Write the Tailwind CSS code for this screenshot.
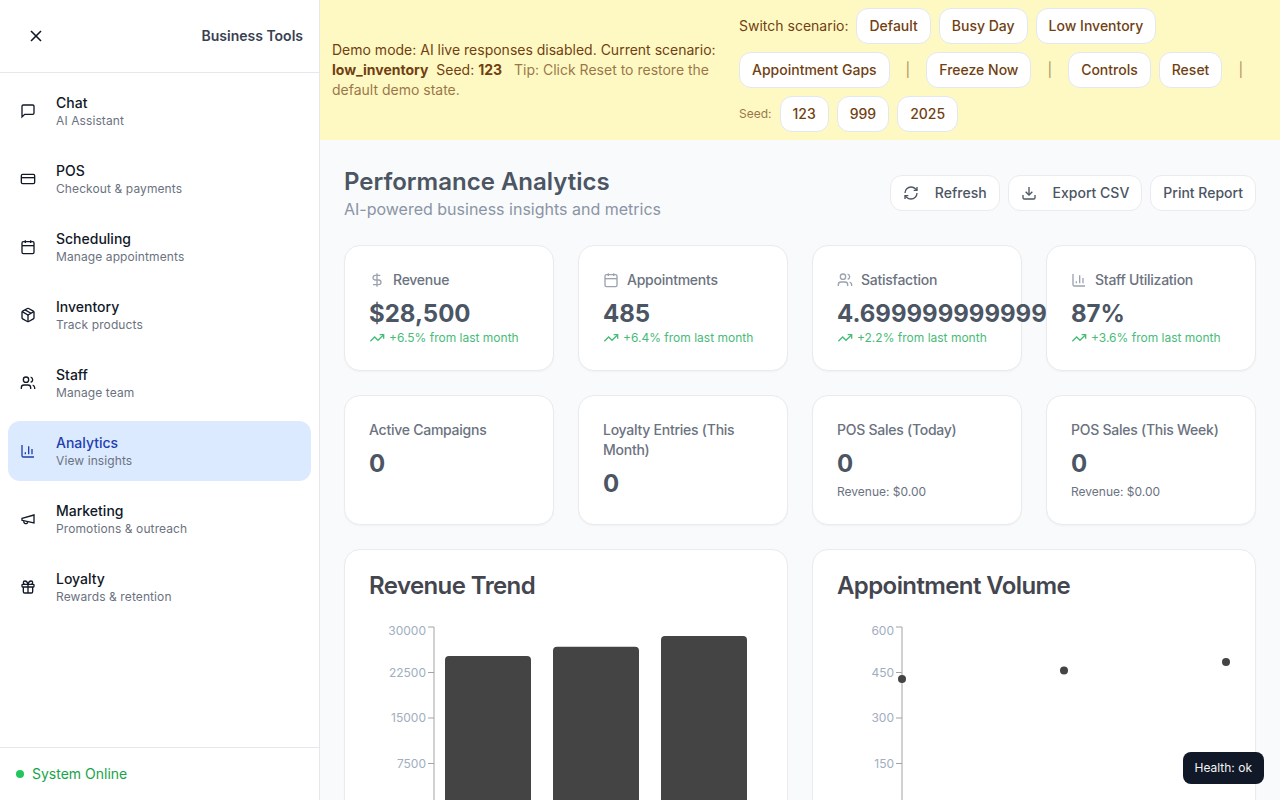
<!DOCTYPE html>
<html lang="en">
<head>
    <meta charset="UTF-8" />
    <meta name="viewport" content="width=device-width, initial-scale=1.0" />
    <title>Performance Analytics</title>
    <script src="https://cdn.jsdelivr.net/npm/@tailwindcss/browser@4"></script>
</head>
<body class="h-screen overflow-hidden flex bg-white font-['Inter',sans-serif]">

<!-- icons -->
<svg class="hidden">
    <symbol id="i-x" viewBox="0 0 24 24"><path d="M18 6 6 18"/><path d="m6 6 12 12"/></symbol>
    <symbol id="i-chat" viewBox="0 0 24 24"><path d="M21 15a2 2 0 0 1-2 2H7l-4 4V5a2 2 0 0 1 2-2h14a2 2 0 0 1 2 2z"/></symbol>
    <symbol id="i-card" viewBox="0 0 24 24"><rect width="20" height="14" x="2" y="5" rx="2"/><line x1="2" x2="22" y1="10" y2="10"/></symbol>
    <symbol id="i-calendar" viewBox="0 0 24 24"><path d="M8 2v4"/><path d="M16 2v4"/><rect width="18" height="18" x="3" y="4" rx="2"/><path d="M3 10h18"/></symbol>
    <symbol id="i-package" viewBox="0 0 24 24"><path d="m7.5 4.27 9 5.15"/><path d="M21 8a2 2 0 0 0-1-1.73l-7-4a2 2 0 0 0-2 0l-7 4A2 2 0 0 0 3 8v8a2 2 0 0 0 1 1.73l7 4a2 2 0 0 0 2 0l7-4A2 2 0 0 0 21 16Z"/><path d="m3.3 7 8.7 5 8.7-5"/><path d="M12 22V12"/></symbol>
    <symbol id="i-users" viewBox="0 0 24 24"><path d="M16 21v-2a4 4 0 0 0-4-4H6a4 4 0 0 0-4 4v2"/><circle cx="9" cy="7" r="4"/><path d="M22 21v-2a4 4 0 0 0-3-3.87"/><path d="M16 3.13a4 4 0 0 1 0 7.75"/></symbol>
    <symbol id="i-bars" viewBox="0 0 24 24"><path d="M3 3v16a2 2 0 0 0 2 2h16"/><path d="M18 17V9"/><path d="M13 17V5"/><path d="M8 17v-3"/></symbol>
    <symbol id="i-megaphone" viewBox="0 0 24 24"><path d="m3 11 18-5v12L3 14v-3z"/><path d="M11.6 16.8a3 3 0 1 1-5.8-1.6"/></symbol>
    <symbol id="i-gift" viewBox="0 0 24 24"><rect x="3" y="8" width="18" height="4" rx="1"/><path d="M12 8v13"/><path d="M19 12v7a2 2 0 0 1-2 2H7a2 2 0 0 1-2-2v-7"/><path d="M7.5 8a2.5 2.5 0 0 1 0-5A4.8 8 0 0 1 12 8a4.8 8 0 0 1 4.5-5 2.5 2.5 0 0 1 0 5"/></symbol>
    <symbol id="i-refresh" viewBox="0 0 24 24"><path d="M3 12a9 9 0 0 1 9-9 9.75 9.75 0 0 1 6.74 2.74L21 8"/><path d="M21 3v5h-5"/><path d="M21 12a9 9 0 0 1-9 9 9.75 9.75 0 0 1-6.74-2.74L3 16"/><path d="M8 16H3v5"/></symbol>
    <symbol id="i-download" viewBox="0 0 24 24"><path d="M21 15v4a2 2 0 0 1-2 2H5a2 2 0 0 1-2-2v-4"/><polyline points="7 10 12 15 17 10"/><line x1="12" x2="12" y1="15" y2="3"/></symbol>
    <symbol id="i-dollar" viewBox="0 0 24 24"><line x1="12" x2="12" y1="2" y2="22"/><path d="M17 5H9.5a3.5 3.5 0 0 0 0 7h5a3.5 3.5 0 0 1 0 7H6"/></symbol>
    <symbol id="i-trend" viewBox="0 0 24 24"><polyline points="22 7 13.5 15.5 8.5 10.5 2 17"/><polyline points="16 7 22 7 22 13"/></symbol>
</svg>

<!-- sidebar -->
<aside class="w-80 shrink-0 h-full flex flex-col border-r border-[#e5e7eb] bg-white">
    <div class="flex items-center justify-between px-4 py-4 border-b border-[#e5e7eb]">
        <button class="p-[10px] text-[#111827]"><svg class="w-5 h-5 fill-none stroke-current stroke-2"><use href="#i-x"/></svg></button>
        <span class="text-sm font-semibold text-[#374151]">Business Tools</span>
    </div>

    <nav class="flex-1 p-2 flex flex-col gap-2">
        <a class="flex items-center gap-5 px-3 py-3 rounded-xl">
            <svg class="w-4 h-4 fill-none stroke-current stroke-2 text-[#111827]"><use href="#i-chat"/></svg>
            <div><div class="text-sm font-medium text-[#111827]">Chat</div><div class="text-xs tracking-[0.1px] text-[#6b7280]">AI Assistant</div></div>
        </a>
        <a class="flex items-center gap-5 px-3 py-3 rounded-xl">
            <svg class="w-4 h-4 fill-none stroke-current stroke-2 text-[#111827]"><use href="#i-card"/></svg>
            <div><div class="text-sm font-medium text-[#111827]">POS</div><div class="text-xs tracking-[0.1px] text-[#6b7280]">Checkout &amp; payments</div></div>
        </a>
        <a class="flex items-center gap-5 px-3 py-3 rounded-xl">
            <svg class="w-4 h-4 fill-none stroke-current stroke-2 text-[#111827]"><use href="#i-calendar"/></svg>
            <div><div class="text-sm font-medium text-[#111827]">Scheduling</div><div class="text-xs tracking-[0.1px] text-[#6b7280]">Manage appointments</div></div>
        </a>
        <a class="flex items-center gap-5 px-3 py-3 rounded-xl">
            <svg class="w-4 h-4 fill-none stroke-current stroke-2 text-[#111827]"><use href="#i-package"/></svg>
            <div><div class="text-sm font-medium text-[#111827]">Inventory</div><div class="text-xs tracking-[0.1px] text-[#6b7280]">Track products</div></div>
        </a>
        <a class="flex items-center gap-5 px-3 py-3 rounded-xl">
            <svg class="w-4 h-4 fill-none stroke-current stroke-2 text-[#111827]"><use href="#i-users"/></svg>
            <div><div class="text-sm font-medium text-[#111827]">Staff</div><div class="text-xs tracking-[0.1px] text-[#6b7280]">Manage team</div></div>
        </a>
        <a class="flex items-center gap-5 px-3 py-3 rounded-xl bg-[#dbeafe]">
            <svg class="w-4 h-4 fill-none stroke-current stroke-2 text-[#1e40af]"><use href="#i-bars"/></svg>
            <div><div class="text-sm font-medium text-[#1e40af]">Analytics</div><div class="text-xs tracking-[0.1px] text-[#6b7280]">View insights</div></div>
        </a>
        <a class="flex items-center gap-5 px-3 py-3 rounded-xl">
            <svg class="w-4 h-4 fill-none stroke-current stroke-2 text-[#111827]"><use href="#i-megaphone"/></svg>
            <div><div class="text-sm font-medium text-[#111827]">Marketing</div><div class="text-xs tracking-[0.1px] text-[#6b7280]">Promotions &amp; outreach</div></div>
        </a>
        <a class="flex items-center gap-5 px-3 py-3 rounded-xl">
            <svg class="w-4 h-4 fill-none stroke-current stroke-2 text-[#111827]"><use href="#i-gift"/></svg>
            <div><div class="text-sm font-medium text-[#111827]">Loyalty</div><div class="text-xs tracking-[0.1px] text-[#6b7280]">Rewards &amp; retention</div></div>
        </a>
    </nav>

    <div class="flex items-center gap-2 p-4 border-t border-[#e5e7eb]">
        <span class="w-2 h-2 rounded-full bg-[#22c55e]"></span>
        <span class="text-sm text-[#16a34a]">System Online</span>
    </div>
</aside>

<div class="flex-1 min-w-0 h-full flex flex-col">
    <!-- demo banner -->
    <div class="shrink-0 flex items-center gap-3 p-2 px-3 bg-[#fef9c3] text-[#713f12] text-sm">
        <div class="w-[395px] shrink-0">
            Demo mode: AI live responses disabled. Current scenario:
            <strong class="font-bold">low_inventory</strong>
            <span class="ml-1">Seed: <strong class="font-bold">123</strong></span>
            <span class="ml-2 opacity-70">Tip: Click Reset to restore the default demo state.</span>
        </div>
        <div class="flex-1 flex flex-wrap items-center gap-2">
            <span>Switch scenario:</span>
            <button class="h-9 px-3 font-medium bg-white border border-[#e2e8f0] rounded-xl">Default</button>
            <button class="h-9 px-3 font-medium bg-white border border-[#e2e8f0] rounded-xl">Busy Day</button>
            <button class="h-9 px-3 font-medium bg-white border border-[#e2e8f0] rounded-xl">Low Inventory</button>
            <button class="h-9 px-3 font-medium bg-white border border-[#e2e8f0] rounded-xl">Appointment Gaps</button>
            <span class="mx-2 opacity-60">|</span>
            <button class="h-9 px-3 font-medium bg-white border border-[#e2e8f0] rounded-xl">Freeze Now</button>
            <span class="mx-2 opacity-60">|</span>
            <button class="h-9 px-3 font-medium bg-white border border-[#e2e8f0] rounded-xl">Controls</button>
            <button class="h-9 px-3 font-medium bg-white border border-[#e2e8f0] rounded-xl">Reset</button>
            <span class="mx-2 opacity-60">|</span>
            <div class="flex items-center gap-2">
                <span class="text-xs opacity-70">Seed:</span>
                <button class="h-9 px-3 font-medium bg-white border border-[#e2e8f0] rounded-xl">123</button>
                <button class="h-9 px-3 font-medium bg-white border border-[#e2e8f0] rounded-xl">999</button>
                <button class="h-9 px-3 font-medium bg-white border border-[#e2e8f0] rounded-xl">2025</button>
            </div>
        </div>
    </div>

    <!-- analytics -->
    <main class="flex-1 min-h-0 overflow-hidden bg-[#f9fafb] p-6">
        <div class="flex items-center justify-between mb-6">
            <div>
                <h1 class="mt-[2px] text-2xl font-semibold text-[#4b5563]">Performance Analytics</h1>
                <p class="-mt-px text-base text-[#8a94a6]">AI-powered business insights and metrics</p>
            </div>
            <div class="flex gap-2 text-sm font-medium text-[#4b5563]">
                <button class="h-9 px-3 flex items-center gap-4 bg-white border border-[#e9ebef] rounded-xl"><svg class="w-4 h-4 fill-none stroke-current stroke-2"><use href="#i-refresh"/></svg>Refresh</button>
                <button class="h-9 px-3 flex items-center gap-4 bg-white border border-[#e9ebef] rounded-xl"><svg class="w-4 h-4 fill-none stroke-current stroke-2"><use href="#i-download"/></svg>Export CSV</button>
                <button class="h-9 px-3 bg-white border border-[#e9ebef] rounded-xl">Print Report</button>
            </div>
        </div>

        <div class="grid grid-cols-4 gap-6 mb-6">
            <div class="relative bg-white border border-[#e9ebef] rounded-2xl shadow-[0_1px_2px_rgba(0,0,0,0.04)] p-6">
                <div class="flex items-center gap-2 text-sm font-medium tracking-[-0.25px] text-[#6b7280]"><svg class="w-4 h-4 fill-none stroke-current stroke-2 text-[#9ca3af]"><use href="#i-dollar"/></svg>Revenue</div>
                <div class="mt-2 text-2xl font-bold text-[#4b5563]">$28,500</div>
                <div class="flex items-center gap-1 text-xs text-[#48bb78]"><svg class="w-4 h-4 fill-none stroke-current stroke-2"><use href="#i-trend"/></svg>+6.5% from last month</div>
            </div>
            <div class="relative bg-white border border-[#e9ebef] rounded-2xl shadow-[0_1px_2px_rgba(0,0,0,0.04)] p-6">
                <div class="flex items-center gap-2 text-sm font-medium tracking-[-0.25px] text-[#6b7280]"><svg class="w-4 h-4 fill-none stroke-current stroke-2 text-[#9ca3af]"><use href="#i-calendar"/></svg>Appointments</div>
                <div class="mt-2 text-2xl font-bold text-[#4b5563]">485</div>
                <div class="flex items-center gap-1 text-xs text-[#48bb78]"><svg class="w-4 h-4 fill-none stroke-current stroke-2"><use href="#i-trend"/></svg>+6.4% from last month</div>
            </div>
            <div class="relative bg-white border border-[#e9ebef] rounded-2xl shadow-[0_1px_2px_rgba(0,0,0,0.04)] p-6">
                <div class="flex items-center gap-2 text-sm font-medium tracking-[-0.25px] text-[#6b7280]"><svg class="w-4 h-4 fill-none stroke-current stroke-2 text-[#9ca3af]"><use href="#i-users"/></svg>Satisfaction</div>
                <div class="mt-2 text-2xl font-bold text-[#4b5563]">4.699999999999999</div>
                <div class="flex items-center gap-1 text-xs text-[#48bb78]"><svg class="w-4 h-4 fill-none stroke-current stroke-2"><use href="#i-trend"/></svg>+2.2% from last month</div>
            </div>
            <div class="relative bg-white border border-[#e9ebef] rounded-2xl shadow-[0_1px_2px_rgba(0,0,0,0.04)] p-6">
                <div class="flex items-center gap-2 text-sm font-medium tracking-[-0.25px] text-[#6b7280]"><svg class="w-4 h-4 fill-none stroke-current stroke-2 text-[#9ca3af]"><use href="#i-bars"/></svg>Staff Utilization</div>
                <div class="mt-2 text-2xl font-bold text-[#4b5563]">87%</div>
                <div class="flex items-center gap-1 text-xs text-[#48bb78]"><svg class="w-4 h-4 fill-none stroke-current stroke-2"><use href="#i-trend"/></svg>+3.6% from last month</div>
            </div>
        </div>

        <div class="grid grid-cols-4 gap-6 mb-6">
            <div class="bg-white border border-[#e9ebef] rounded-2xl shadow-[0_1px_2px_rgba(0,0,0,0.04)] p-6">
                <div class="text-sm font-medium tracking-[-0.25px] text-[#6b7280]">Active Campaigns</div>
                <div class="mt-2 text-2xl font-bold text-[#4b5563]">0</div>
            </div>
            <div class="bg-white border border-[#e9ebef] rounded-2xl shadow-[0_1px_2px_rgba(0,0,0,0.04)] p-6">
                <div class="text-sm font-medium tracking-[-0.25px] text-[#6b7280]">Loyalty Entries (This Month)</div>
                <div class="mt-2 text-2xl font-bold text-[#4b5563]">0</div>
            </div>
            <div class="bg-white border border-[#e9ebef] rounded-2xl shadow-[0_1px_2px_rgba(0,0,0,0.04)] p-6">
                <div class="text-sm font-medium tracking-[-0.25px] text-[#6b7280]">POS Sales (Today)</div>
                <div class="mt-2 text-2xl font-bold text-[#4b5563]">0</div>
                <div class="mt-1 text-xs text-[#6b7280]">Revenue: $0.00</div>
            </div>
            <div class="bg-white border border-[#e9ebef] rounded-2xl shadow-[0_1px_2px_rgba(0,0,0,0.04)] p-6">
                <div class="text-sm font-medium tracking-[-0.25px] text-[#6b7280]">POS Sales (This Week)</div>
                <div class="mt-2 text-2xl font-bold text-[#4b5563]">0</div>
                <div class="mt-1 text-xs text-[#6b7280]">Revenue: $0.00</div>
            </div>
        </div>

        <div class="grid grid-cols-2 gap-6">
            <div class="bg-white border border-[#e9ebef] rounded-2xl shadow-[0_1px_2px_rgba(0,0,0,0.04)] px-6 pt-5 pb-6">
                <h2 class="text-2xl font-semibold tracking-tight text-[#44464f]">Revenue Trend</h2>
                <svg class="mt-[10px] w-full h-[300px] overflow-visible text-xs" viewBox="0 0 394 300">
                    <g class="stroke-[#a3a3a3]">
                        <line x1="65" x2="65" y1="15" y2="300"/>
                        <line x1="59" x2="65" y1="15" y2="15"/>
                        <line x1="59" x2="65" y1="60.5" y2="60.5"/>
                        <line x1="59" x2="65" y1="106" y2="106"/>
                        <line x1="59" x2="65" y1="151.5" y2="151.5"/>
                    </g>
                    <g class="fill-[#a0aec0]" text-anchor="end">
                        <text x="57" y="23">30000</text>
                        <text x="57" y="65">22500</text>
                        <text x="57" y="110">15000</text>
                        <text x="57" y="155.5">7500</text>
                    </g>
                    <g class="fill-[#444444]">
                        <rect x="76" y="44" width="86" height="280" rx="4"/>
                        <rect x="184" y="34.7" width="86" height="290" rx="4"/>
                        <rect x="292" y="24" width="86" height="300" rx="4"/>
                    </g>
                </svg>
            </div>
            <div class="bg-white border border-[#e9ebef] rounded-2xl shadow-[0_1px_2px_rgba(0,0,0,0.04)] px-6 pt-5 pb-6">
                <h2 class="text-2xl font-semibold tracking-tight text-[#44464f]">Appointment Volume</h2>
                <svg class="mt-[10px] w-full h-[300px] overflow-visible text-xs" viewBox="0 0 394 300">
                    <g class="stroke-[#a3a3a3]">
                        <line x1="65" x2="65" y1="15" y2="300"/>
                        <line x1="59" x2="65" y1="15" y2="15"/>
                        <line x1="59" x2="65" y1="60.5" y2="60.5"/>
                        <line x1="59" x2="65" y1="106" y2="106"/>
                        <line x1="59" x2="65" y1="151.5" y2="151.5"/>
                    </g>
                    <g class="fill-[#a0aec0]" text-anchor="end">
                        <text x="57" y="23">600</text>
                        <text x="57" y="65">450</text>
                        <text x="57" y="110">300</text>
                        <text x="57" y="155.5">150</text>
                    </g>
                    <g class="fill-[#444444]">
                        <circle cx="65" cy="67" r="4"/>
                        <circle cx="227" cy="58.5" r="4"/>
                        <circle cx="389" cy="50" r="4"/>
                    </g>
                </svg>
            </div>
        </div>
    </main>
</div>

<!-- health badge -->
<div class="fixed bottom-4 right-4 px-3 py-2 rounded-lg bg-[#111827] text-xs text-[#f3f4f6]">Health: ok</div>

</body>
</html>
